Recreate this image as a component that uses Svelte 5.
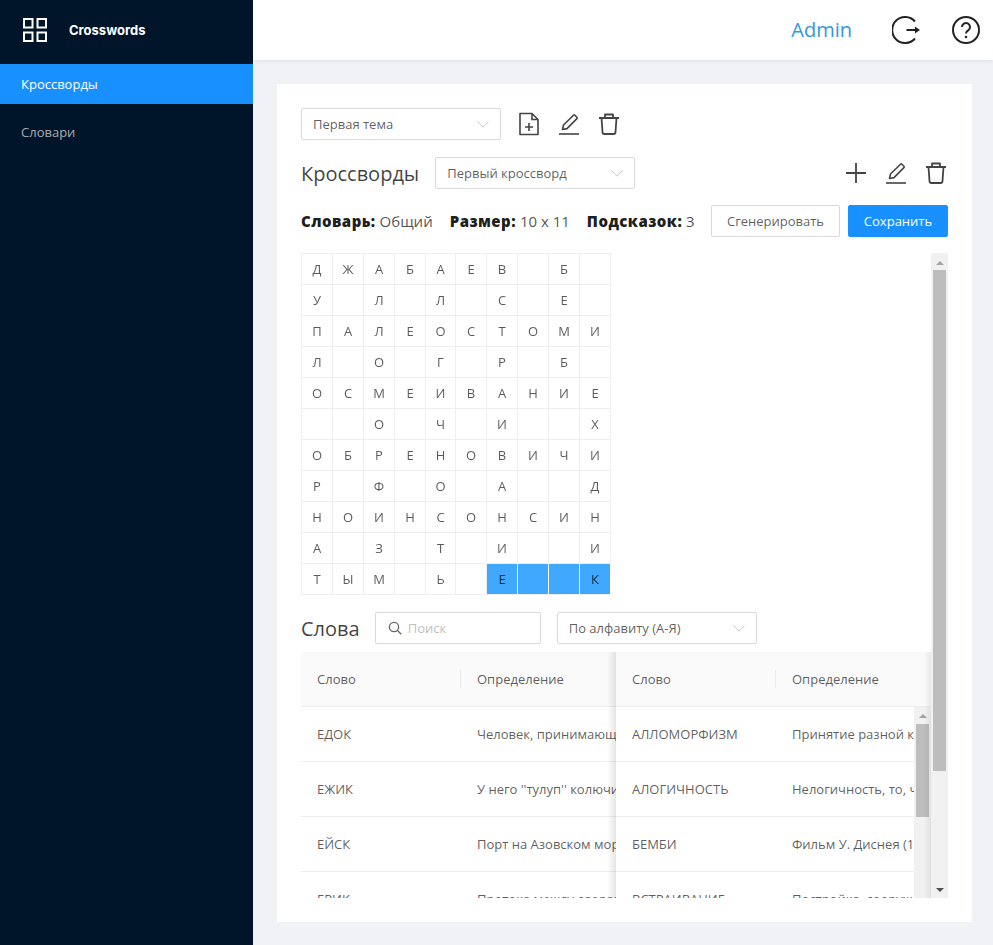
<script>
  const grid = [
    "ДЖАБАЕВ Б ",
    "У Л Л С Е ",
    "ПАЛЕОСТОМИ",
    "Л О Г Р Б ",
    "ОСМЕИВАНИЕ",
    "  О Ч И  Х",
    "ОБРЕНОВИЧИ",
    "Р Ф О А  Д",
    "НОИНСОНСИН",
    "А З Т И  И",
    "ТЫМ Ь Е  К",
  ];
  const leftRows = [
    ["ЕДОК", "Человек, принимающий пищу"],
    ["ЕЖИК", "У него ''тулуп'' колючий"],
    ["ЕЙСК", "Порт на Азовском море"],
    ["ЕРИК", "Протока между озерами"],
  ];
  const rightRows = [
    ["АЛЛОМОРФИЗМ", "Принятие разной кристаллической формы"],
    ["АЛОГИЧНОСТЬ", "Нелогичность, то, что противоречит логике"],
    ["БЕМБИ", "Фильм У. Диснея (1942)"],
    ["ВСТРАИВАНИЕ", "Постройка, сооружение внутри"],
  ];
  const isSelected = (r, c) => r === 10 && c >= 6;
</script>

{#snippet chevron()}
  <svg class="chevron" viewBox="0 0 12 7" width="12" height="7"><path d="M.5.5 6 6.2 11.5.5" fill="none" stroke="#c8c8c8" /></svg>
{/snippet}

{#snippet edit()}
  <svg class="icon" viewBox="0 0 24 24" width="24" height="24" fill="none" stroke="#444" stroke-width="1.6">
    <path d="M5.5 17.5 6.5 13 16.5 3.2a1 1 0 0 1 1.4 0l2 2a1 1 0 0 1 0 1.4L10 16.6z" stroke-linejoin="round" />
    <path d="M2 22h20" />
  </svg>
{/snippet}

{#snippet trash()}
  <svg class="icon" viewBox="0 0 24 24" width="24" height="24" fill="none" stroke="#444" stroke-width="1.8">
    <path d="M2 6h20M8 5V2.5h8V5M4.5 6l1 14a2 2 0 0 0 2 2h9a2 2 0 0 0 2-2l1-14" stroke-linejoin="round" />
  </svg>
{/snippet}

{#snippet table(rows)}
  <div class="thead">
    <div class="col-word">Слово</div>
    <div class="col-def">Определение</div>
  </div>
  <div class="tbody">
    {#each rows as row}
      <div class="tr">
        <div class="col-word">{row[0]}</div>
        <div class="col-def">{row[1]}</div>
      </div>
    {/each}
  </div>
{/snippet}

<div class="layout">
  <aside class="sidebar">
    <div class="logo">
      <svg viewBox="0 0 24 24" width="24" height="24" fill="none" stroke="#fff" stroke-width="2">
        <rect x="1" y="1" width="8.5" height="8.5" />
        <rect x="14.5" y="1" width="8.5" height="8.5" />
        <rect x="1" y="14.5" width="8.5" height="8.5" />
        <rect x="14.5" y="14.5" width="8.5" height="8.5" />
      </svg>
      <span>Crosswords</span>
    </div>
    <nav>
      <div class="nav-item active">Кроссворды</div>
      <div class="nav-item">Словари</div>
    </nav>
  </aside>

  <main class="main">
    <header class="header">
      <span class="user">Admin</span>
      <svg viewBox="0 0 28 28" width="28" height="28" fill="none" stroke="#222" stroke-width="2">
        <path d="M23 5.5A13 13 0 1 0 23 22.5" />
        <path d="M14.5 14H24" />
        <path d="M23 10.5 28 14l-5 3.5z" fill="#222" stroke="none" />
      </svg>
      <svg viewBox="0 0 28 28" width="28" height="28" fill="none" stroke="#222" stroke-width="2">
        <circle cx="14" cy="14" r="13" />
        <path d="M10 11a4 4 0 1 1 6.4 3.2c-1.5 1-2.4 1.6-2.4 3.3" />
        <circle cx="14" cy="21" r="1.3" fill="#222" stroke="none" />
      </svg>
    </header>

    <section class="card">
      <div class="row first">
        <div class="select">Первая тема {@render chevron()}</div>
        <div class="tools">
          <svg class="icon" viewBox="0 0 24 24" width="24" height="24" fill="none" stroke="#444" stroke-width="1.6">
            <path d="M3 1.5h12l6 6v15H3z" stroke-linejoin="round" />
            <path d="M15 1.5v6h6M12 11v8M8 15h8" />
          </svg>
          {@render edit()}
          {@render trash()}
        </div>
      </div>

      <div class="row second">
        <h2>Кроссворды</h2>
        <div class="select">Первый кроссворд {@render chevron()}</div>
        <div class="tools right">
          <svg class="icon" viewBox="0 0 24 24" width="24" height="24" fill="none" stroke="#444" stroke-width="1.8">
            <path d="M12 2v20M2 12h20" />
          </svg>
          {@render edit()}
          {@render trash()}
        </div>
      </div>

      <div class="row third">
        <div class="info"><b>Словарь:</b> Общий</div>
        <div class="info"><b>Размер:</b> 10 x 11</div>
        <div class="info"><b>Подсказок:</b> 3</div>
        <button class="btn">Сгенерировать</button>
        <button class="btn primary">Сохранить</button>
      </div>

      <div class="scroll">
        <div class="scroll-content">
          <div class="grid">
            {#each grid as line, r}
              {#each line.split("") as letter, c}
                <div class="cell" class:selected={isSelected(r, c)}>{letter}</div>
              {/each}
            {/each}
          </div>

          <div class="row words">
            <h2>Слова</h2>
            <div class="search">
              <svg viewBox="0 0 14 14" width="14" height="14" fill="none" stroke="#666" stroke-width="1.3">
                <circle cx="6" cy="6" r="4.6" />
                <path d="m9.5 9.5 3.7 3.7" />
              </svg>
              <span>Поиск</span>
            </div>
            <div class="select">По алфавиту (А-Я) {@render chevron()}</div>
          </div>

          <div class="tables">
            <div class="table">{@render table(leftRows)}</div>
            <div class="table fixed">
              {@render table(rightRows)}
              <div class="inner-bar">
                <span class="up"></span>
                <span class="thumb"></span>
              </div>
              <div class="edge"></div>
            </div>
            <div class="fixed-shadow"></div>
          </div>
        </div>

        <div class="bar">
          <span class="up"></span>
          <span class="thumb"></span>
          <span class="down"></span>
        </div>
      </div>
    </section>
  </main>
</div>

<style>
  :global(body) {
    font-family: "Open Sans", "Liberation Sans", sans-serif;
    font-size: 13px;
    color: rgba(0, 0, 0, 0.65);
  }
  .layout {
    display: flex;
    height: 945px;
    overflow: hidden;
    background: #f0f2f5;
  }
  .sidebar {
    width: 253px;
    flex: none;
    background: #001529;
  }
  .logo {
    height: 60px;
    padding-left: 23px;
    display: flex;
    align-items: center;
    gap: 22px;
    color: #fff;
    font-family: Inter, sans-serif;
    font-size: 13px;
    font-weight: 700;
    box-sizing: border-box;
  }
  nav {
    margin-top: 4px;
    font-size: 13px;
  }
  .nav-item {
    height: 40px;
    line-height: 40px;
    padding-left: 21px;
    margin-bottom: 8px;
    color: rgba(255, 255, 255, 0.65);
  }
  .nav-item.active {
    background: #1890ff;
    color: #fff;
  }
  .main {
    flex: 1;
    min-width: 0;
    display: flex;
    flex-direction: column;
  }
  .header {
    height: 60px;
    flex: none;
    background: #fff;
    box-shadow: 0 1px 4px rgba(0, 21, 41, 0.08);
    display: flex;
    align-items: center;
    justify-content: flex-end;
    padding-right: 13px;
    gap: 32px;
  }
  .user {
    color: #3498db;
    font-size: 20px;
    margin-right: 8px;
    margin-bottom: 2px;
  }
  .card {
    flex: 1;
    min-height: 0;
    margin: 24px 21px 23px 24px;
    padding: 24px;
    background: #fff;
    display: flex;
    flex-direction: column;
  }
  .row {
    display: flex;
    align-items: center;
    height: 32px;
    flex: none;
  }
  .first { margin-bottom: 17px; }
  .second { margin-bottom: 16px; }
  .third { margin-bottom: 16px; }
  h2 {
    margin: 0;
    font-size: 20px;
    font-weight: 400;
    color: rgba(0, 0, 0, 0.75);
  }
  .second h2 { margin-right: 16px; }
  .select {
    width: 200px;
    height: 32px;
    box-sizing: border-box;
    border: 1px solid #d9d9d9;
    border-radius: 2px;
    padding: 0 11px;
    display: flex;
    align-items: center;
    justify-content: space-between;
  }
  .chevron { flex: none; }
  .tools {
    display: flex;
    gap: 16px;
    margin-left: 16px;
  }
  .tools.right {
    margin-left: auto;
  }
  .icon { display: block; }
  .info {
    flex: none;
    white-space: nowrap;
    font-size: 15px;
    color: rgba(0, 0, 0, 0.7);
  }
  .info + .info {
    margin-left: 17px;
  }
  .info b {
    font-weight: 800;
    letter-spacing: 0.45px;
    color: rgba(0, 0, 0, 0.9);
  }
  .btn {
    flex: none;
    height: 32px;
    box-sizing: border-box;
    border: 1px solid #d9d9d9;
    border-radius: 2px;
    background: #fff;
    font: inherit;
    color: rgba(0, 0, 0, 0.65);
    padding: 0;
    width: 129px;
    margin-left: auto;
  }
  .btn.primary {
    width: 100px;
    margin-left: 8px;
    background: #1890ff;
    border-color: #1890ff;
    color: #fff;
  }
  .scroll {
    flex: 1;
    min-height: 0;
    display: flex;
    overflow: hidden;
  }
  .scroll-content {
    flex: 1;
    min-width: 0;
  }
  .grid {
    display: grid;
    /* the fifth column is a pixel narrower, like a table rounding its cells */
    grid-template-columns: repeat(4, 31px) 30px repeat(5, 31px);
    grid-auto-rows: 31px;
    width: 310px;
    border-top: 1px solid #eee;
    border-left: 1px solid #eee;
    will-change: transform;
  }
  .cell {
    box-sizing: border-box;
    border-right: 1px solid #eee;
    border-bottom: 1px solid #eee;
    display: flex;
    align-items: center;
    justify-content: center;
  }
  .cell.selected {
    background: #40a9ff;
    border-right-color: #fff;
    color: rgba(0, 0, 0, 0.75);
  }
  .words {
    margin-top: 17px;
    margin-bottom: 8px;
  }
  .words h2 { margin-right: 15px; }
  .search {
    width: 166px;
    height: 32px;
    box-sizing: border-box;
    border: 1px solid #d9d9d9;
    border-radius: 2px;
    padding-left: 12px;
    margin-right: 16px;
    display: flex;
    align-items: center;
    gap: 6px;
    color: #bfbfbf;
  }
  .tables {
    position: relative;
  }
  .table {
    overflow: hidden;
  }
  .fixed {
    position: absolute;
    top: 0;
    bottom: 0;
    left: 315px;
    right: 0;
    background: #fff;
  }
  .fixed-shadow {
    position: absolute;
    top: 0;
    bottom: 0;
    left: 306px;
    width: 9px;
    background: linear-gradient(to right, transparent, rgba(0, 0, 0, 0.1));
  }
  .thead,
  .tr {
    display: flex;
    white-space: nowrap;
    box-sizing: border-box;
    height: 55px;
    align-items: center;
    border-bottom: 1px solid #eee;
  }
  .thead {
    background: #fafafa;
  }
  .col-word {
    width: 160px;
    flex: none;
    padding-left: 16px;
    box-sizing: border-box;
    position: relative;
  }
  .thead .col-word::after {
    content: "";
    position: absolute;
    right: 0;
    top: 0;
    bottom: 0;
    width: 1px;
    background: #eaeaea;
  }
  .col-def {
    padding-left: 16px;
  }
  .inner-bar {
    position: absolute;
    top: 55px;
    bottom: 0;
    right: 0;
    width: 17px;
    background: #f1f1f1;
    display: flex;
    flex-direction: column;
    align-items: center;
  }
  .inner-bar .up { margin-top: 7px; }
  .inner-bar .thumb {
    margin-top: 6px;
    height: 93px;
    width: 13px;
  }
  .edge {
    position: absolute;
    top: 0;
    bottom: 0;
    right: 0;
    width: 7px;
    background: linear-gradient(to right, transparent, rgba(0, 0, 0, 0.07));
  }
  .bar {
    width: 17px;
    flex: none;
    background: #f1f1f1;
    display: flex;
    flex-direction: column;
    align-items: center;
    position: relative;
  }
  .bar .up { margin-top: 8px; }
  .bar .thumb {
    margin-top: 5px;
    height: 501px;
    width: 13px;
  }
  .bar .down {
    margin-top: auto;
    margin-bottom: 6px;
  }
  .thumb {
    background: #bdbdbd;
    display: block;
  }
  .up,
  .down {
    width: 0;
    height: 0;
    border-left: 4px solid transparent;
    border-right: 4px solid transparent;
    display: block;
  }
  .up { border-bottom: 4px solid #a3a3a3; }
  .down { border-top: 4px solid #505050; }
</style>
